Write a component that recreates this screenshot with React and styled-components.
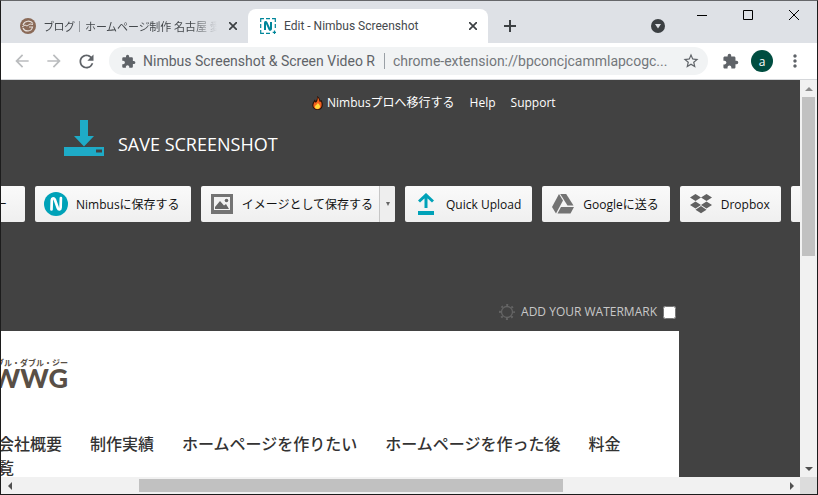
import React, { useState } from 'react';
import styled, { createGlobalStyle } from 'styled-components';
import { MdExtension, MdStarBorder, MdRefresh, MdArrowBack, MdArrowForward, MdMoreVert } from 'react-icons/md';

const exportButtons = [
  { label: 'Nimbusに保存する', icon: <NimbusIcon /> },
  { label: 'イメージとして保存する', icon: <ImageIcon />, menu: true },
  { label: 'Quick Upload', icon: <UploadIcon /> },
  { label: 'Googleに送る', icon: <DriveIcon /> },
  { label: 'Dropbox', icon: <DropboxIcon /> },
];

const siteLinks = ['会社概要', '制作実績', 'ホームページを作りたい', 'ホームページを作った後', '料金'];

export default function App() {
  const [watermark, setWatermark] = useState(false);

  return (
    <BrowserWindow>
      <GlobalStyle />
      <TabStrip>
        <Tab>
          <BlogIcon />
          <TabTitle $fade>ブログ｜ホームページ制作 名古屋 愛知</TabTitle>
          <TabButton aria-label="Close tab">
            <CrossIcon />
          </TabButton>
        </Tab>
        <Tab $active>
          <ScreenshotIcon />
          <TabTitle>Edit - Nimbus Screenshot</TabTitle>
          <TabButton aria-label="Close tab">
            <CrossIcon />
          </TabButton>
        </Tab>
        <NewTab aria-label="New tab">
          <PlusIcon />
        </NewTab>
        <SearchTabs aria-label="Search tabs">
          <svg width="14" height="14" viewBox="0 0 14 14">
            <circle cx="7" cy="7" r="7" fill="#3c4043" />
            <path d="M4 5h6L7 9.5z" fill="#dee1e6" />
          </svg>
        </SearchTabs>
        <WindowControls>
          <ControlButton aria-label="Minimize">
            <svg width="10" height="10">
              <path d="M0 5.5h10" stroke="#000" />
            </svg>
          </ControlButton>
          <ControlButton aria-label="Maximize">
            <svg width="10" height="10">
              <path d="M.5 .5h9v9h-9z" stroke="#000" fill="none" />
            </svg>
          </ControlButton>
          <ControlButton aria-label="Close">
            <svg width="10" height="10">
              <path d="M0 0l10 10M10 0L0 10" stroke="#000" />
            </svg>
          </ControlButton>
        </WindowControls>
      </TabStrip>

      <Toolbar>
        <ToolButton aria-label="Back" $muted>
          <MdArrowBack size={20} />
        </ToolButton>
        <ToolButton aria-label="Forward" $muted>
          <MdArrowForward size={20} />
        </ToolButton>
        <ToolButton aria-label="Reload">
          <MdRefresh size={21} />
        </ToolButton>
        <AddressBar>
          <MdExtension size={15} />
          <ExtensionName>Nimbus Screenshot &amp; Screen Video R</ExtensionName>
          <Divider />
          <Url>chrome-extension://bpconcjcammlapcogc...</Url>
          <StarButton aria-label="Bookmark">
            <MdStarBorder size={18} />
          </StarButton>
        </AddressBar>
        <ToolButton aria-label="Extensions" $narrow>
          <MdExtension size={17} />
        </ToolButton>
        <Avatar aria-label="Profile">a</Avatar>
        <ToolButton aria-label="Menu" $narrow>
          <MdMoreVert size={20} />
        </ToolButton>
      </Toolbar>

      <Body>
        <Page>
          <TopLinks>
            <a href="#pro">
              <FlameIcon />
              Nimbusプロへ移行する
            </a>
            <a href="#help">Help</a>
            <a href="#support">Support</a>
          </TopLinks>
          <Heading>
            <SaveIcon />
            <h1>SAVE SCREENSHOT</h1>
          </Heading>
          <Actions>
            <ActionGroup>
              <ActionButton $start>ー</ActionButton>
            </ActionGroup>
            {exportButtons.map((item) => (
              <ActionGroup key={item.label}>
                <ActionButton $menu={item.menu}>
                  <IconSlot>{item.icon}</IconSlot>
                  {item.label}
                </ActionButton>
                {item.menu && (
                  <MenuButton aria-label="Format">
                    <svg width="4" height="4">
                      <path d="M0 0h4L2 4z" fill="#666" />
                    </svg>
                  </MenuButton>
                )}
              </ActionGroup>
            ))}
            <ActionGroup>
              <ActionButton aria-label="More" />
            </ActionGroup>
          </Actions>
          <Watermark>
            <GearIcon />
            <label htmlFor="watermark">ADD YOUR WATERMARK</label>
            <input
              id="watermark"
              type="checkbox"
              checked={watermark}
              onChange={(e) => setWatermark(e.target.checked)}
            />
          </Watermark>
          <Preview>
            <SiteLogo>
              <small>ブル・ダブル・ジー</small>
              <strong>WWG</strong>
            </SiteLogo>
            <SiteNav>
              {siteLinks.map((link) => (
                <a href="#site" key={link}>
                  {link}
                </a>
              ))}
            </SiteNav>
            <SiteNav>
              <a href="#site">覧</a>
            </SiteNav>
          </Preview>
        </Page>
        <VerticalBar>
          <Arrow d="M1 7h8L5 3z" color="#8b8b8b" />
          <VerticalThumb />
          <Spacer />
          <Arrow d="M1 3h8L5 7z" />
        </VerticalBar>
        <HorizontalBar>
          <Arrow d="M7 1v8L3 5z" />
          <Track>
            <HorizontalThumb />
          </Track>
          <Arrow d="M3 1v8l4-4z" />
        </HorizontalBar>
        <Corner />
      </Body>
    </BrowserWindow>
  );
}

function Arrow({ d, color = '#505050' }) {
  return (
    <ArrowButton aria-label="Scroll">
      <svg width="10" height="10">
        <path d={d} fill={color} />
      </svg>
    </ArrowButton>
  );
}

function CrossIcon() {
  return (
    <svg width="8" height="8" viewBox="0 0 8 8">
      <path d="M0 0l8 8M8 0L0 8" stroke="#3c4043" strokeWidth="1.7" />
    </svg>
  );
}

function PlusIcon() {
  return (
    <svg width="12" height="12" viewBox="0 0 12 12">
      <path d="M6 0v12M0 6h12" stroke="#3c4043" strokeWidth="2" />
    </svg>
  );
}

function BlogIcon() {
  return (
    <svg width="16" height="16" viewBox="0 0 16 16">
      <circle cx="8" cy="8" r="8" fill="#8a6a58" />
      <path
        d="M13 5.500C10.500 2 4.500 2.500 3 7M3 10c1.800 4.200 8.500 4 9.500-1H9"
        fill="none"
        stroke="#e6e0dc"
        strokeWidth="1.2"
      />
      <path d="M2 9l3-2 2 1 3-2 3 .500" fill="none" stroke="#e6e0dc" />
    </svg>
  );
}

function ScreenshotIcon() {
  return (
    <svg width="16" height="16" viewBox="0 0 16 16" fill="none" stroke="#00869a">
      <path
        d="M.7 4V.7H4M6 .7h4M12 .7h3.300V4M.7 6v4M15.300 6v4M.7 12v3.300H4M6 15.300h4M14.500 12.500v3.500M12.700 14.300h3.300"
        strokeWidth="1.2"
      />
      <path d="M5 12V5c0-1.300 1-1.300 1.500-.3l3 6.500c.5 1 1.500.8 1.500-.4V4" strokeWidth="2" />
    </svg>
  );
}

function FlameIcon() {
  return (
    <svg width="11" height="14" viewBox="0 0 11 14">
      <path
        d="M5 0c2 1 3 3 3 4.500L9.500 4C11 7 11 9 10.500 10.500 10 13 8 14 5.500 14S.5 12.500 .3 9.800C0 7 2 5.500 2.500 3.500L3.800 5C5 3.500 5.300 2 5 0z"
        fill="#2b1208"
      />
      <path
        d="M5.600 1.300C7.500 3.500 7 5 7.800 6L9 5.500c1.200 3 1 7.500-3.500 7.700C1 13 .5 9 2.700 5.800l1 1C5.500 5.500 6 3.500 5.600 1.300z"
        fill="#f4611e"
      />
      <path d="M5.800 7c1.400 1.200 2.500 2.500 2.200 4-.3 2.500-5 2.500-5.200 0C2.700 9.300 5.200 9 5.800 7z" fill="#ffd83c" />
    </svg>
  );
}

function SaveIcon() {
  return (
    <svg width="40" height="36" viewBox="0 0 40 36" fill="#1eabc7">
      <path d="M16 0h8v16h6L20 26.500 10 16h6z" />
      <path d="M0 27h40v9H0zM32 29.500v3h6v-3z" fillRule="evenodd" />
    </svg>
  );
}

function NimbusIcon() {
  return (
    <svg width="24" height="24" viewBox="0 0 24 24">
      <circle cx="12" cy="12" r="12" fill="#00a2b8" />
      <path
        d="M7.500 17.500l.3-9.500c.1-2.200 2.200-2.300 3-.5l3 8.500c.8 2 2.700 1.700 2.800-.4l.3-9.600"
        fill="none"
        stroke="#fff"
        strokeWidth="2.7"
        strokeLinecap="round"
      />
    </svg>
  );
}

function ImageIcon() {
  return (
    <svg width="22" height="20" viewBox="0 0 22 20">
      <path d="M0 0h22v20H0z" fill="#737373" />
      <path d="M3 3h16v13H3z" fill="#f1f1f1" />
      <path d="M4 15v-2l5-6 4 4.500 2-1.500 3 5z" fill="#666" />
      <circle cx="15.500" cy="6.500" r="1.800" fill="#666" />
    </svg>
  );
}

function UploadIcon() {
  return (
    <svg width="16" height="22" viewBox="0 0 16 22">
      <path d="M8 15V2M1 8.500L8 2l7 6.500" fill="none" stroke="#00a2b8" strokeWidth="3" />
      <path d="M0 18h16v4H0z" fill="#00a2b8" />
    </svg>
  );
}

function DriveIcon() {
  return (
    <svg width="22" height="20" viewBox="0 0 22 20" fill="#737373">
      <path d="M7 0l4 6.500L4 19.500 0 13z" />
      <path d="M8.200 0h6l7.300 11.500h-6z" />
      <path d="M9 13h13l-3.500 6.500H5.500z" />
    </svg>
  );
}

function DropboxIcon() {
  return (
    <svg width="22" height="20" viewBox="0 0 22 20" fill="#616161">
      <path d="M5.500 0L11 3.500 5.500 7 0 3.500zM16.500 0L22 3.500 16.500 7 11 3.500zM5.500 7.500L11 11l-5.500 3.500L0 11zM16.500 7.500L22 11l-5.500 3.500L11 11zM11 12l5.500 3.800L11 19.300l-5.500-3.500z" />
    </svg>
  );
}

function GearIcon() {
  return (
    <svg width="16" height="16" viewBox="0 0 16 16" fill="none" stroke="#646464">
      <circle cx="8" cy="8" r="5.500" strokeWidth="1.3" />
      <circle cx="8" cy="8" r="7" strokeWidth="2" strokeDasharray="2 3.498" strokeDashoffset="1" />
    </svg>
  );
}

const GlobalStyle = createGlobalStyle`
  * {
    box-sizing: border-box;
  }
  body {
    margin: 0;
    font-family: 'Open Sans', 'Noto Sans CJK JP', sans-serif;
    font-size: 12px;
  }
  button {
    display: flex;
    align-items: center;
    justify-content: center;
    padding: 0;
    border: none;
    background: none;
    font: inherit;
  }
  a {
    color: inherit;
    text-decoration: none;
  }
  svg {
    flex: none;
  }
`;

const BrowserWindow = styled.div`
  display: flex;
  flex-direction: column;
  height: 100vh;
  border: 1px solid #1c1c1c;
  border-top-color: #66676a;
  background: #fff;
  overflow: hidden;
`;

const TabStrip = styled.div`
  display: flex;
  flex: none;
  height: 42px;
  padding-left: 7px;
  background: #dee1e6;
`;

const Tab = styled.div`
  display: flex;
  align-items: center;
  width: 240px;
  height: 34px;
  margin-top: 8px;
  padding: 0 7px 0 12px;
  gap: 8px;
  border-radius: 8px 8px 0 0;
  background: ${(props) => (props.$active ? '#fff' : 'transparent')};
`;

const TabTitle = styled.span`
  flex: 1;
  overflow: hidden;
  white-space: nowrap;
  color: #45494d;
  font-family: Roboto, 'Noto Sans CJK JP', sans-serif;
  font-feature-settings: 'palt';
  ${(props) =>
    props.$fade &&
    `
    font-size: 11px;
    mask-image: linear-gradient(to right, #000 85%, transparent);
  `}
`;

const TabButton = styled.button`
  width: 16px;
  height: 16px;
`;

const NewTab = styled.button`
  width: 28px;
  height: 28px;
  margin: 11px 0 0 8px;
`;

const SearchTabs = styled.button`
  width: 28px;
  height: 28px;
  margin: 11px 7px 0 auto;
`;

const WindowControls = styled.div`
  display: flex;
  height: 28px;
`;

const ControlButton = styled.button`
  width: 46px;
`;

const Toolbar = styled.div`
  display: flex;
  flex: none;
  align-items: center;
  height: 37px;
  padding: 0 8px 0 5px;
  border-bottom: 1px solid #d5d7da;
`;

const ToolButton = styled.button`
  width: ${(props) => (props.$narrow ? '28px' : '32px')};
  height: 28px;
  color: ${(props) => (props.$muted ? '#babcbe' : '#5f6368')};
`;

const AddressBar = styled.div`
  display: flex;
  flex: 1;
  align-items: center;
  min-width: 0;
  height: 28px;
  margin: 0 8px 0 7px;
  padding: 0 8px 0 12px;
  border-radius: 14px;
  background: #f1f3f4;
  color: #5f6368;
  font-family: Roboto, sans-serif;
  font-size: 14px;
  white-space: nowrap;
`;

const ExtensionName = styled.span`
  margin-left: 7px;
`;

const Divider = styled.span`
  width: 1px;
  height: 16px;
  margin: 0 8px 0 9px;
  background: #9aa0a6;
`;

const Url = styled.span`
  flex: 1;
  overflow: hidden;
  color: #73777b;
`;

const StarButton = styled.button`
  color: #5f6368;
`;

const Avatar = styled.button`
  width: 22px;
  height: 22px;
  margin: 0 8px 0 7px;
  border-radius: 50%;
  background: #004d40;
  color: #fff;
`;

const Body = styled.div`
  display: grid;
  flex: 1;
  grid-template-columns: minmax(0, 1fr) 17px;
  grid-template-rows: minmax(0, 1fr) 17px;
  min-height: 0;
`;

const Page = styled.main`
  overflow: hidden;
  background: #424242;
  color: #fff;
  white-space: nowrap;
`;

const TopLinks = styled.nav`
  display: flex;
  gap: 15px;
  padding: 14px 0 0 311px;
  line-height: 18px;
  a {
    display: flex;
    align-items: center;
    gap: 4px;
  }
`;

const Heading = styled.header`
  display: flex;
  gap: 14px;
  padding: 8px 0 0 63px;
  h1 {
    margin: 12px 0 0;
    font-size: 18px;
    font-weight: 400;
    line-height: 24px;
  }
`;

const Actions = styled.div`
  display: flex;
  gap: 10px;
  padding-top: 30px;
`;

const ActionGroup = styled.div`
  display: flex;
  flex: none;
  height: 36px;
  border-radius: 2px;
  background: linear-gradient(#fafafa, #efefef);
  overflow: hidden;
  &:first-child {
    margin-left: -8px;
  }
`;

const ActionButton = styled.button`
  gap: 8px;
  min-width: 32px;
  padding: 0 ${(props) => (props.$menu ? '6px' : '11px')} 0 9px;
  ${(props) => props.$start && 'padding: 0 18px 0 2px;'}
  color: #111;
`;

const IconSlot = styled.span`
  display: flex;
  justify-content: center;
  width: 24px;
`;

const MenuButton = styled.button`
  width: 16px;
  border-left: 1px solid #c6c6c6;
  background: #eee;
`;

const Watermark = styled.div`
  display: flex;
  align-items: center;
  justify-content: flex-end;
  width: 675px;
  max-width: 100%;
  margin-top: 80px;
  line-height: 20px;
  color: #c8c8c8;
  label {
    margin: 0 6px;
  }
  input {
    width: 13px;
    height: 13px;
    margin: 0;
  }
`;

const Preview = styled.section`
  width: 678px;
  max-width: 100%;
  height: 100%;
  margin-top: 9px;
  background: #fff;
  color: #333;
`;

const SiteLogo = styled.div`
  display: flex;
  flex-direction: column;
  align-items: flex-end;
  width: 67px;
  padding-top: 27px;
  color: #594f46;
  small {
    font-size: 8px;
    font-weight: 700;
    line-height: 9px;
  }
  strong {
    font-family: Lato, sans-serif;
    font-size: 27px;
    font-weight: 900;
    line-height: 22px;
  }
`;

const SiteNav = styled.nav`
  display: flex;
  gap: 28px;
  margin-left: -3px;
  font-size: 16px;
  font-weight: 500;
  line-height: 24px;
  ${SiteLogo} + & {
    margin-top: 43px;
  }
`;

const VerticalBar = styled.div`
  display: flex;
  flex-direction: column;
  align-items: center;
  background: #f1f1f1;
`;

const VerticalThumb = styled.div`
  flex: 0 0 40%;
  width: 13px;
  background: #c1c1c1;
`;

const Spacer = styled.div`
  flex: 1;
`;

const HorizontalBar = styled.div`
  display: flex;
  align-items: center;
  background: #f1f1f1;
`;

const Track = styled.div`
  flex: 1;
`;

const HorizontalThumb = styled.div`
  width: 55.5%;
  height: 13px;
  margin-left: 15.8%;
  background: #c1c1c1;
`;

const ArrowButton = styled.button`
  flex: none;
  width: 17px;
  height: 17px;
`;

const Corner = styled.div`
  background: #dcdcdc;
`;
